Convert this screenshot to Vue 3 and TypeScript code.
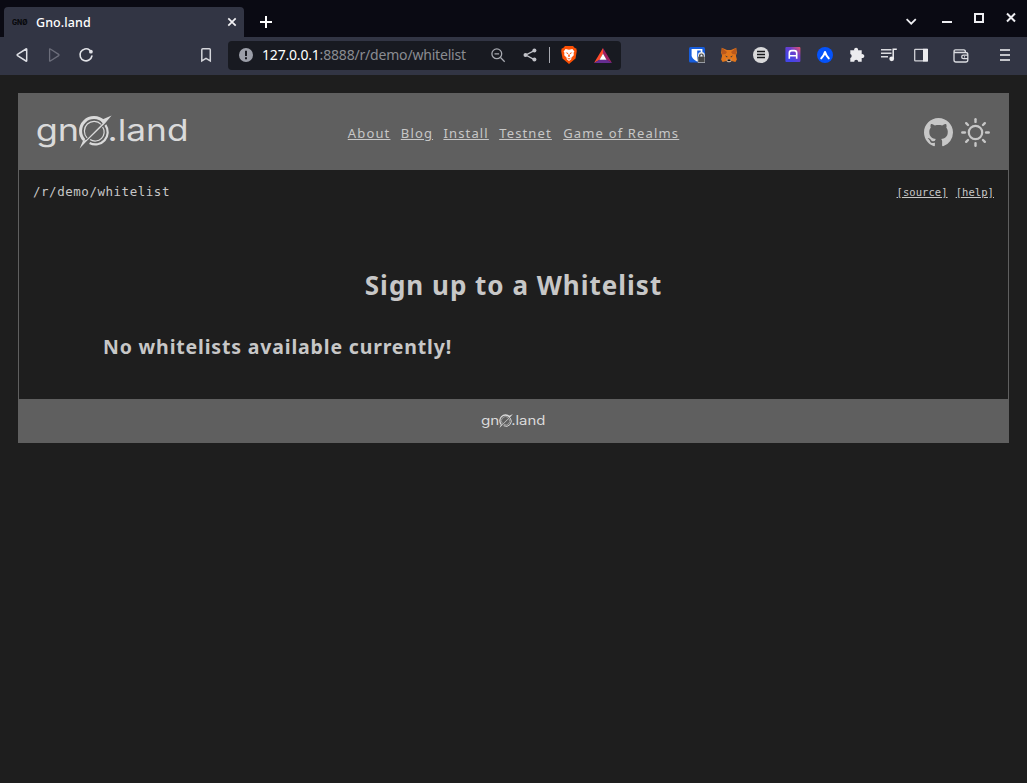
<script setup lang="ts">
interface NavLink {
  label: string
  kind: string
}

const links: NavLink[] = [
  { label: 'About', kind: 'about' },
  { label: 'Blog', kind: 'blog' },
  { label: 'Install', kind: 'install' },
  { label: 'Testnet', kind: 'testnet' },
  { label: 'Game of Realms', kind: 'realms' },
]
const rays: number[] = [0, 45, 90, 135, 180, 225, 270, 315]
</script>

<template>
  <div class="window">
    <div class="tabbar">
      <div class="tab">
        <svg class="favicon" width="16" height="16" viewBox="0 0 16 16">
          <text x="0" y="8" font-size="7" font-weight="800" textLength="15.5" lengthAdjust="spacingAndGlyphs">GNØ</text>
        </svg>
        <span class="tab-title">Gno.land</span>
        <svg class="tab-close" width="10" height="10" viewBox="0 0 10 10"><path d="M1.3 1.3l7.4 7.4M8.7 1.3L1.3 8.7" stroke="#f2f2f5" stroke-width="1.7" /></svg>
      </div>
      <svg class="plus" width="12" height="12" viewBox="0 0 12 12"><path d="M6 0v12M0 6h12" stroke="#fff" stroke-width="2" /></svg>
      <div class="controls">
        <svg width="110" height="14" viewBox="0 0 110 14" fill="none" stroke="#eeeef2" stroke-width="2">
          <path d="M.6 7.2l4.6 4.5 4.6-4.5" stroke-width="1.8" />
          <path d="M36 10h10" />
          <path d="M69 2h8v8h-8z" />
          <path d="M101 1.5l8 8M109 1.5l-8 8" />
        </svg>
      </div>
    </div>

    <div class="toolbar">
      <div class="cells">
        <span class="cell"><svg width="16" height="16" viewBox="0 0 16 16" fill="none" stroke="#dedfe5" stroke-width="1.5" stroke-linejoin="round"><path d="M12.7 2.2v11.6q0 .6-.7.2L3.500 8.600q-.7-.6 0-1.200L12 2q.7-.4.7.2z" /></svg></span>
        <span class="cell"><svg width="16" height="16" viewBox="0 0 16 16" fill="none" stroke="#6c6e7b" stroke-width="1.300" stroke-linejoin="round"><path d="M3.600 2.200v11.600q0 .6.7.2L12.700 8.600q.7-.6 0-1.200L4.300 2q-.7-.4-.7.2z" /></svg></span>
        <span class="cell"><svg width="16" height="16" viewBox="0 0 16 16" fill="none" stroke="#e2e3e8" stroke-width="1.600"><path d="M11.700 3.100A6 6 0 1 0 13.900 9" stroke-linecap="round" /><circle cx="12.900" cy="4.700" r="1.900" fill="#e2e3e8" stroke="none" /></svg></span>
      </div>
      <span class="cell bookmark"><svg width="16" height="16" viewBox="0 0 16 16"><path d="M3.800 2.700q0-1 1-1h6.500q1 0 1 1v11.200L8 11.300 3.800 13.900z" fill="none" stroke="#d4d5da" stroke-width="1.500" /></svg></span>

      <div class="address">
        <svg class="info" width="14" height="14" viewBox="0 0 14 14"><circle cx="7" cy="7" r="7" fill="#9c9fa9" /><path d="M7 2.700v5.300M7 9.300v2" stroke="#181a21" stroke-width="2" /></svg>
        <span class="url"><b>127.0.0.1</b>:8888/r/demo/whitelist</span>
        <span class="cell zoomer"><svg width="16" height="16" viewBox="0 0 16 16" fill="none" stroke="#a7a9b0" stroke-width="1.300"><circle cx="6.800" cy="6.800" r="4.900" /><path d="M10.500 10.500l4.200 4.200M4.500 6.800h4.600" /></svg></span>
        <span class="cell"><svg width="16" height="16" viewBox="0 0 16 16"><path d="M12.300 3.600L3.800 8l8.500 4.600" fill="none" stroke="#c1c2c8" stroke-width="1.300" /><g fill="#c1c2c8"><circle cx="12.400" cy="3.600" r="2" /><circle cx="3.500" cy="8" r="2" /><circle cx="12.400" cy="12.400" r="2" /></g></svg></span>
        <i class="divider"></i>
        <svg class="lion" width="16" height="18" viewBox="0 0 16 18">
          <path d="M4 0h8l1.800 2 1.500.4.5 2.600-1.300 7.500L8 18l-6.500-5.500L.2 5l.5-2.600L2.200 2z" fill="#fb5005" />
          <path d="M4.600 3L8 3.700 11.400 3l2 2.600-.8 1.200.2 2.400-2.300 2.200-.3 1.800L8 15l-2.200-1.800-.3-1.800-2.300-2.200.2-2.400-.8-1.200z" fill="#fff" />
          <path d="M4.500 6.200l2.600.8-.4 1.300zM11.500 6.200l-2.600.8.4 1.300zM8 7.300L7 10.300l1 .7 1-.7zM5.800 11.500L8 12.600l2.200-1.100L8 13.700z" fill="#fb5005" />
        </svg>
        <svg class="bat" width="18" height="15" viewBox="0 0 18 15"><path d="M9 0L0 15l5.700-3.300L9 5.500z" fill="#ff4b2b" /><path d="M9 0l9 15-5.700-3.300L9 5.500z" fill="#9e1f63" /><path d="M0 15h18l-5.700-3.500H5.700z" fill="#662d91" /><path d="M9 5.500l3.500 6.200h-7z" fill="#fff" /></svg>
      </div>

      <div class="cells extensions">
        <span class="cell"><svg width="16" height="16" viewBox="0 0 16 16"><rect width="16" height="15.500" rx="1.500" fill="#175ddc" /><path d="M2.600 2h10.800v6.500q0 3.200-5.400 6-5.400-2.800-5.400-6z" fill="#fff" /><path d="M8.200 3.500h3.500v5.200q0 2-3.500 4z" fill="#175ddc" /><path d="M10.200 10V8.300q0-2 2.200-2t2.200 2V10" fill="none" stroke="#e8e8e8" stroke-width="2.400" /><rect x="8.800" y="9.200" width="7.200" height="6.500" rx="1" fill="#454545" stroke="#ddd" stroke-width=".7" /><path d="M10.600 9.800V8.500q0-1.500 1.800-1.500t1.800 1.500v1.300" fill="none" stroke="#454545" stroke-width="1.200" /></svg></span>
        <span class="cell"><svg width="16" height="16" viewBox="0 0 16 16"><path d="M.8.700L6 3h4l5.200-2.300.7 5-1 3 1 3.700-1.500 2.500-3.600-.9L9.400 15H6.600l-1.400-1-3.600.9L.1 12.400l1-3.700-1-3z" fill="#e2761b" /><path d="M.8.700l5.200 4.400L4.500 7 1 7.500zM15.200.700L10 5.100 11.500 7l3.500.5z" fill="#b9581c" /><path d="M4 8.500l2.500 1-.5 1zM12 8.500l-2.500 1 .5 1z" fill="#233447" /><path d="M5.600 11.500l1.200 1.300h2.400l1.200-1.300-.3 3-1 .8H6.900l-1-.8z" fill="#c0ad9e" /><path d="M6.700 12.500h2.600l.2 1.500h-3z" fill="#161616" /></svg></span>
        <span class="cell"><svg width="16" height="16" viewBox="0 0 16 16"><circle cx="8" cy="8" r="8" fill="#d9d9db" /><path d="M4 4.500h8M4 7.500h8M4 10.500h8" stroke="#17181c" stroke-width="1.500" /></svg></span>
        <span class="cell"><svg width="16" height="16" viewBox="0 0 16 16"><defs><linearGradient id="agoric" x1="0" y1="1" x2="1" y2="0"><stop offset=".25" stop-color="#4345e8" /><stop offset=".65" stop-color="#713ec9" /><stop offset="1" stop-color="#ed5365" /></linearGradient></defs><rect x=".4" y="0" width="15" height="15" rx="1" fill="url(#agoric)" /><path d="M4.300 11.800V6q0-2.400 2.400-2.400h2.600q2.400 0 2.400 2.400v5.800M4.300 8.700h7.400" fill="none" stroke="#fff" stroke-width="1.600" /></svg></span>
        <span class="cell"><svg width="16" height="16" viewBox="0 0 16 16"><circle cx="8" cy="8" r="8" fill="#0553fb" /><path d="M4.300 11.300Q6.500 9.500 8 5q1.500 4.500 3.700 6.300" fill="none" stroke="#fff" stroke-width="2.100" stroke-linecap="round" stroke-linejoin="round" /></svg></span>
        <span class="cell"><svg width="16" height="16" viewBox="0 0 16 16"><path d="M1.300 3.300h3.900a2 2 0 1 1 3.800 0h3.700v3.900a2 2 0 1 1 0 3.800v3.700H9.200a2 2 0 0 0-4 0H1.300v-3.800a2 2 0 0 0 0-3.800z" fill="#ececef" /></svg></span>
        <span class="cell"><svg width="16" height="16" viewBox="0 0 16 16"><path d="M0 2.700h10.500M0 6.200h10.500M0 9.700h7" stroke="#d9dade" stroke-width="1.600" /><path d="M12.200 11.500V2.300h3.600" fill="none" stroke="#ececef" stroke-width="1.500" /><circle cx="10.700" cy="11.800" r="2.400" fill="#ececef" /></svg></span>
        <span class="cell"><svg width="16" height="16" viewBox="0 0 16 16"><rect x="1.700" y="2.400" width="12.600" height="11.500" rx=".6" fill="none" stroke="#d1d2d7" stroke-width="1.300" /><path d="M10 1.800h5v12.700h-5z" fill="#ececef" /></svg></span>
        <span class="cell wallet"><svg width="18" height="16" viewBox="0 0 18 16" fill="none" stroke="#dadbe0" stroke-width="1.300"><path d="M2 4.700V13q0 2 2 2h9.800q2 0 2-2V7.500q0-2-2-2H3.500q-1.500 0-1.500-1.400 0-1.300 1.500-1.300h8.300q1.700 0 1.700 2.400" /><path d="M16 8.100h-4.500q-1.800 0-1.800 1.800t1.800 1.800H16M12 9.900h1" /></svg></span>
        <span class="cell menu"><svg width="16" height="16" viewBox="0 0 16 16"><path d="M3 3h10M3 8h10M3 13h10" stroke="#c4c5ca" stroke-width="2" /></svg></span>
      </div>
    </div>

    <main class="page">
      <header class="header">
        <svg class="wordmark" width="154" height="40" viewBox="0 0 154 40">
          <defs>
            <g id="gno-logo">
              <text x="-.300" y="28" textLength="43.500" lengthAdjust="spacingAndGlyphs">gn</text>
              <g class="ring" fill="none">
                <path d="M48.300 27.300A12.300 12.300 0 0 1 67.600 8.700" stroke-width="3" />
                <path d="M69.400 12A12.300 12.300 0 0 1 53.600 30" stroke-width="2.200" />
                <path d="M51.100 24.800A9 9 0 0 1 65.100 11.300M66.600 14A9 9 0 0 1 54.100 26.500" stroke-width="1.200" />
              </g>
              <path d="M75.600 2.500L69.100 10.200 50.800 28 43.600 35.500l3.500-8 3.100-.6L66.800 10.300 64.600 7.300z" class="slash" />
              <text x="71.500" y="28" textLength="81" lengthAdjust="spacingAndGlyphs">.land</text>
            </g>
          </defs>
          <use href="#gno-logo" />
        </svg>
        <nav class="nav">
          <a v-for="link in links" :key="link.kind" :class="link.kind">{{ link.label }}</a>
        </nav>
        <div class="actions">
          <svg width="29" height="29" viewBox="0 0 16 16"><path fill="#c7c7c7" d="M8 0C3.580 0 0 3.580 0 8c0 3.540 2.290 6.530 5.470 7.590.4.070.55-.17.55-.38 0-.19-.01-.82-.01-1.490-2.010.37-2.530-.49-2.690-.94-.09-.23-.48-.94-.82-1.130-.28-.15-.68-.52-.01-.53.63-.01 1.080.58 1.230.82.72 1.210 1.870.87 2.330.66.070-.52.280-.87.510-1.070-1.780-.2-3.640-.89-3.640-3.950 0-.87.310-1.590.82-2.150-.08-.2-.36-1.020.08-2.120 0 0 .67-.21 2.200.82.640-.18 1.320-.27 2-.27s1.360.09 2 .27c1.530-1.040 2.200-.82 2.200-.82.440 1.100.160 1.920.080 2.120.510.560.820 1.270.820 2.150 0 3.070-1.870 3.750-3.650 3.950.290.250.540.730.540 1.480 0 1.070-.01 1.930-.01 2.200 0 .210.150.460.550.380A8.010 8.010 0 0 0 16 8c0-4.420-3.580-8-8-8z" /></svg>
          <svg width="30" height="30" viewBox="-14.500 -14.500 30 30" fill="none" stroke="#c7c7c7"><circle r="6.700" stroke-width="2.200" /><path v-for="ray in rays" :key="ray" d="M0-10.600v-2.600" :transform="`rotate(${ray})`" stroke-width="2.400" stroke-linecap="round" /></svg>
        </div>
      </header>

      <div class="pathbar">
        <span class="path">/r/demo/whitelist</span>
        <span class="tools"><a>[source]</a><a>[help]</a></span>
      </div>

      <article class="content">
        <h1>Sign up to a Whitelist</h1>
        <h2>No whitelists available currently!</h2>
      </article>

      <footer class="footer">
        <svg class="wordmark" width="65" height="17" viewBox="0 0 154 40"><use href="#gno-logo" /></svg>
      </footer>
    </main>
  </div>
</template>

<style>
body {
  background: #1e1e1e;
}
</style>

<style scoped>
.window {
  height: 783px;
  overflow: hidden;
  background: #1e1e1e;
  font-family: "Noto Sans", "Open Sans", sans-serif;
}
svg {
  display: block;
  flex: none;
}
.tabbar {
  display: flex;
  height: 37px;
  background: #0a0a13;
}
.tab {
  display: flex;
  align-items: center;
  width: 240px;
  height: 30px;
  margin: 7px 0 0 4px;
  padding: 0 7px 0 8px;
  box-sizing: border-box;
  border-radius: 4px 4px 0 0;
  background: #323544;
}
.favicon text {
  font-family: "Inter", sans-serif;
  fill: #08090c;
}
.favicon {
  margin-top: 5px;
}
.tab-title {
  flex: 1;
  margin-left: 8px;
  color: #fff;
  font-size: 12.500px;
  font-weight: 500;
  letter-spacing: 0.080px;
}
.plus {
  margin: 16px 0 0 16px;
}
.controls {
  margin: 12px 11px 0 auto;
}
.toolbar {
  display: flex;
  align-items: center;
  height: 38px;
  padding: 0 6px;
  background: #323544;
}
.cells {
  display: flex;
  position: relative;
  top: -1px;
}
.cell {
  display: flex;
  justify-content: center;
  align-items: center;
  flex: none;
  width: 32px;
  height: 36px;
}
.bookmark {
  margin: 0 0 2px 88px;
}
.address {
  display: flex;
  align-items: center;
  width: 393px;
  height: 29px;
  margin: 0 0 1px 6px;
  padding-left: 11px;
  box-sizing: border-box;
  border-radius: 4px;
  background: #181a21;
}
.info,
.address .cell,
.divider,
.lion,
.bat {
  margin-bottom: 1px;
}
.url {
  width: 220px;
  margin: 0 0 2px 9px;
  color: #8a8c92;
  font-size: 14px;
  letter-spacing: -0.190px;
  white-space: nowrap;
}
.url b {
  color: #fff;
  font-weight: 400;
}
.divider {
  width: 1px;
  height: 16px;
  margin-left: 3px;
  background: #a7a9b0;
}
.lion {
  margin-left: 11px;
}
.bat {
  margin-left: 17px;
}
.extensions {
  margin-left: auto;
}
.wallet {
  margin-left: 8px;
}
.menu {
  margin-left: 12px;
}
.page {
  margin: 18px 18px 0;
  border: 1px solid #5f5f5f;
  box-sizing: border-box;
  width: 991px;
  height: 350px;
  color: #c7c7c7;
}
.header {
  display: grid;
  grid-template-columns: 1fr auto 1fr;
  align-items: center;
  height: 76px;
  padding: 2px 17px 0;
  box-sizing: border-box;
  background: #5f5f5f;
}
.wordmark {
  fill: #dadada;
  stroke: none;
  font-family: "Inter", sans-serif;
  font-size: 30px;
  font-weight: 400;
}
.ring {
  stroke: #dadada;
}
.nav {
  display: flex;
  gap: 10.300px;
  font-size: 13px;
  letter-spacing: 1.160px;
}
.nav .realms {
  margin-left: 1px;
}
.nav a,
.tools a {
  text-decoration: underline;
  white-space: nowrap;
}
.actions {
  display: flex;
  justify-content: flex-end;
  gap: 8px;
}
.pathbar {
  display: flex;
  justify-content: space-between;
  align-items: center;
  height: 44px;
  padding: 0 14px 2px;
  box-sizing: border-box;
  font-family: "DejaVu Sans Mono", "Liberation Mono", monospace;
}
.path {
  font-size: 12.500px;
  letter-spacing: 0.530px;
}
.tools {
  display: flex;
  gap: 8px;
  padding-top: 1px;
  font-size: 10.500px;
  letter-spacing: 0.070px;
}
.content {
  height: 185px;
  box-sizing: border-box;
  padding: 52px 84px 0;
}
h1,
h2 {
  margin: 0;
  font-weight: 700;
  white-space: nowrap;
}
h1 {
  font-size: 26px;
  line-height: 38px;
  letter-spacing: 1px;
  text-align: center;
}
h2 {
  margin-top: 28px;
  font-size: 19.500px;
  line-height: 30px;
  letter-spacing: 0.830px;
}
.footer {
  display: flex;
  justify-content: center;
  align-items: center;
  height: 43px;
  padding-top: 1px;
  box-sizing: border-box;
  background: #5f5f5f;
}
</style>
